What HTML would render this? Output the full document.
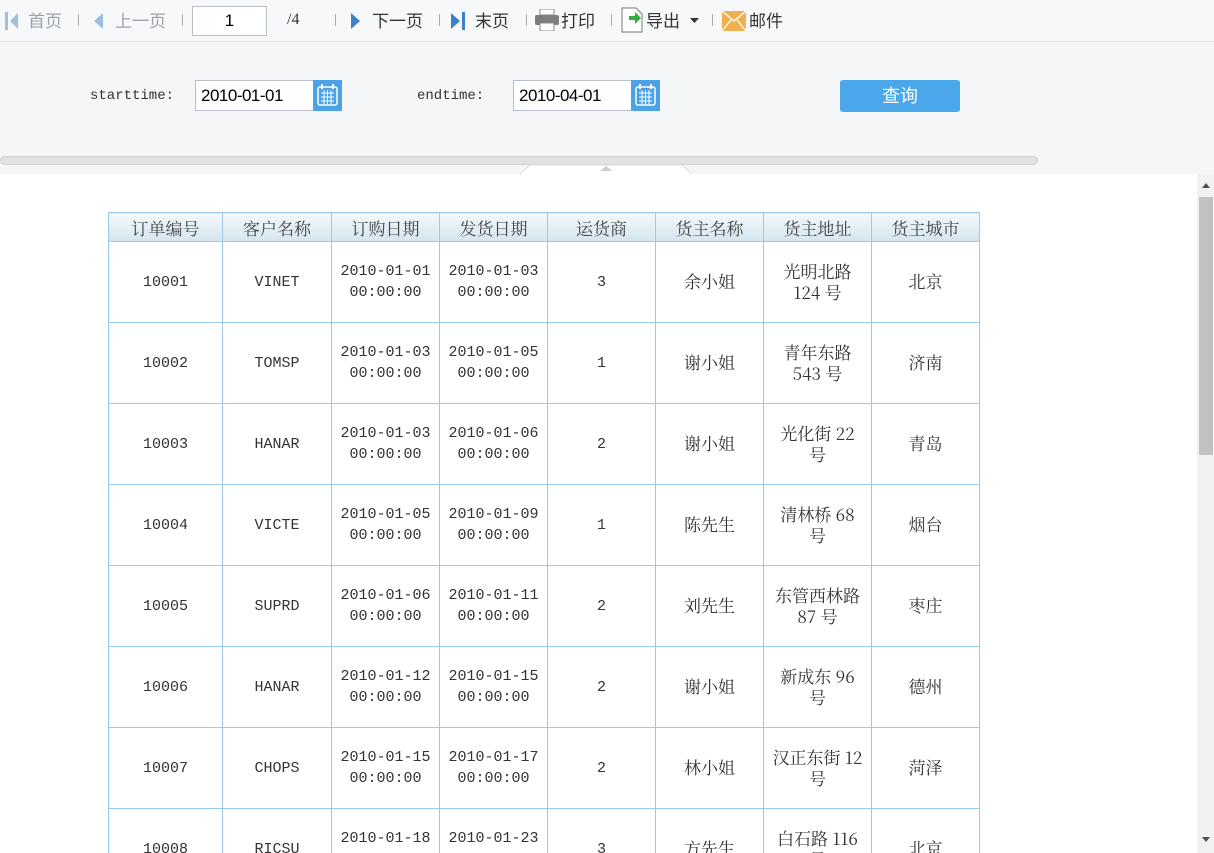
<!DOCTYPE html>
<html style="overflow:hidden;height:853px"><head><meta charset="utf-8"><style>
*{margin:0;padding:0;box-sizing:border-box}
body{width:1214px;height:853px;overflow:hidden;background:#fff;font-family:"Liberation Sans","Noto Sans CJK SC",sans-serif;position:relative}
.tb{position:absolute;left:0;top:0;width:1214px;height:42px;background:#f7f8fa;border-bottom:1px solid #e3e5e8}
.t{position:absolute;top:7px;font-size:17px;color:#333;white-space:nowrap}
.g{color:#9aa3ad}
.sep{position:absolute;top:14px;width:1px;height:12px;background:#aaa}
.top{position:absolute;left:0;top:42px;width:1214px;height:132px;background:#f5f6f8}
.lbl{position:absolute;top:88px;font-family:"Liberation Mono",monospace;font-size:14px;color:#333}
.inp{position:absolute;top:80px;height:31px;border:1px solid #b7bdc9;background:#fff;font-size:17px;padding:5px 5px;color:#000;letter-spacing:-0.5px}
.cal{position:absolute;top:80px;width:29px;height:31px;background:#4aa3e6}
.btn{position:absolute;left:840px;top:80px;width:120px;height:32px;background:#4aa8ea;border-radius:3px;color:#fff;font-size:18px;text-align:center;line-height:32px}
.wrap{position:absolute;left:0;top:174px;width:1197px;height:679px;overflow:hidden}
table{position:absolute;left:108px;top:38px;border-collapse:collapse;font-family:"Liberation Mono","Noto Serif CJK SC",monospace;font-size:15px;color:#333}
td,th{border:1px solid #9cc8ec;text-align:center;font-weight:normal;line-height:21px}
th{height:29px;background:linear-gradient(#f3f8fb,#d4e5ef);font-size:17px;color:#444;font-family:"Noto Serif CJK SC",serif}
td{height:81px}
td.c{font-family:"Noto Serif CJK SC",serif;font-size:17px;line-height:21px;padding-bottom:3px}
</style></head><body>
<div class="tb">
<svg style="position:absolute;left:5px;top:12px" width="20" height="18"><rect x="0" y="0" width="3" height="18" fill="#9fbfdf"/><path d="M5 9 L13 1 L13 17Z" fill="#9fbfdf"/></svg>
<span class="t g" style="left:28px">首页</span><div class="sep" style="left:78px"></div>
<svg style="position:absolute;left:94px;top:12px" width="12" height="18"><path d="M0 9 L9 1 L9 17Z" fill="#9fbfdf"/></svg>
<span class="t g" style="left:115px">上一页</span><div class="sep" style="left:182px"></div>
<div style="position:absolute;left:192px;top:6px;width:75px;height:30px;border:1px solid #b7bdc9;background:#fff;text-align:center;font-size:17px;line-height:28px">1</div>
<span class="t" style="left:287px;font-family:'Liberation Serif',serif;font-size:16px;top:11px">/4</span><div class="sep" style="left:335px"></div>
<svg style="position:absolute;left:350px;top:12px" width="12" height="18"><path d="M1 1 L10 9 L1 17Z" fill="#3b82c8"/></svg>
<span class="t" style="left:372px">下一页</span><div class="sep" style="left:439px"></div>
<svg style="position:absolute;left:451px;top:12px" width="20" height="18"><path d="M0 1 L9 9 L0 17Z" fill="#3b82c8"/><rect x="11" y="0" width="3" height="18" fill="#3b82c8"/></svg>
<span class="t" style="left:475px">末页</span><div class="sep" style="left:526px"></div>
<svg style="position:absolute;left:535px;top:9px" width="24" height="22"><rect x="5" y="0" width="14" height="6" fill="#fff" stroke="#888"/><rect x="0" y="6" width="24" height="10" rx="2" fill="#7d7d7d"/><rect x="5" y="14" width="14" height="8" fill="#fff" stroke="#888"/></svg>
<span class="t" style="left:561px">打印</span><div class="sep" style="left:611px"></div>
<svg style="position:absolute;left:621px;top:7px" width="22" height="26"><path d="M1 1 H15 L21 7 V25 H1Z" fill="#fff" stroke="#777"/><path d="M8 9 H14 V5 L20 11 L14 17 V13 H8Z" fill="#2fae3c"/></svg>
<span class="t" style="left:646px">导出</span>
<svg style="position:absolute;left:690px;top:18px" width="9" height="6"><path d="M0 0 H9 L4.5 5Z" fill="#333"/></svg>
<div class="sep" style="left:712px"></div>
<svg style="position:absolute;left:722px;top:11px" width="24" height="20"><rect width="24" height="20" fill="#f0b050"/><path d="M0 0 L12 10 L24 0 M0 20 L9 9 M24 20 L15 9" stroke="#fff" stroke-width="1.3" fill="none"/></svg>
<span class="t" style="left:749px">邮件</span>
</div>
<div class="top"></div>
<span class="lbl" style="left:90px">starttime:</span>
<div class="inp" style="left:195px;width:120px">2010-01-01</div>
<div class="cal" style="left:313px"><svg width="29" height="31"><rect x="5" y="7" width="19" height="18" rx="2" fill="none" stroke="#fff" stroke-width="1.5"/><path d="M8 13H21M8 17H21M8 21H21M11 10V24M14.5 10V24M18 10V24" stroke="#fff" stroke-width="1"/><rect x="8" y="4" width="2" height="5" fill="#fff"/><rect x="19" y="4" width="2" height="5" fill="#fff"/></svg></div>
<span class="lbl" style="left:417px">endtime:</span>
<div class="inp" style="left:513px;width:120px">2010-04-01</div>
<div class="cal" style="left:631px"><svg width="29" height="31"><rect x="5" y="7" width="19" height="18" rx="2" fill="none" stroke="#fff" stroke-width="1.5"/><path d="M8 13H21M8 17H21M8 21H21M11 10V24M14.5 10V24M18 10V24" stroke="#fff" stroke-width="1"/><rect x="8" y="4" width="2" height="5" fill="#fff"/><rect x="19" y="4" width="2" height="5" fill="#fff"/></svg></div>
<div class="btn">查询</div>
<div style="position:absolute;left:0;top:156px;width:1038px;height:9px;background:#e2e2e2;border:1px solid #d2d2d2;border-radius:5px"></div>
<svg style="position:absolute;left:520px;top:164px" width="172" height="10"><path d="M0 10 L10 1 H162 L172 10" fill="#fff" stroke="#ddd"/><path d="M80 7 L86 2 L92 7Z" fill="#ccc"/></svg>
<div style="position:absolute;left:1197px;top:174px;width:17px;height:679px;background:#f1f1f1"></div>
<div style="position:absolute;left:1199px;top:197px;width:14px;height:258px;background:#c1c1c1"></div>
<svg style="position:absolute;left:1201px;top:181px" width="10" height="8"><path d="M1 7 L5 2 L9 7Z" fill="#505050"/></svg>
<svg style="position:absolute;left:1201px;top:836px" width="10" height="8"><path d="M1 1 L5 6 L9 1Z" fill="#505050"/></svg>
<div class="wrap">
<table>
<tr><th style="width:114px">订单编号</th><th style="width:109px">客户名称</th><th style="width:108px">订购日期</th><th style="width:108px">发货日期</th><th style="width:108px">运货商</th><th style="width:108px">货主名称</th><th style="width:108px">货主地址</th><th style="width:108px">货主城市</th></tr>
<tr><td>10001</td><td>VINET</td><td>2010-01-01<br>00:00:00</td><td>2010-01-03<br>00:00:00</td><td>3</td><td class="c">余小姐</td><td class="c">光明北路<br>124 号</td><td class="c">北京</td></tr>
<tr><td>10002</td><td>TOMSP</td><td>2010-01-03<br>00:00:00</td><td>2010-01-05<br>00:00:00</td><td>1</td><td class="c">谢小姐</td><td class="c">青年东路<br>543 号</td><td class="c">济南</td></tr>
<tr><td>10003</td><td>HANAR</td><td>2010-01-03<br>00:00:00</td><td>2010-01-06<br>00:00:00</td><td>2</td><td class="c">谢小姐</td><td class="c">光化街 22<br>号</td><td class="c">青岛</td></tr>
<tr><td>10004</td><td>VICTE</td><td>2010-01-05<br>00:00:00</td><td>2010-01-09<br>00:00:00</td><td>1</td><td class="c">陈先生</td><td class="c">清林桥 68<br>号</td><td class="c">烟台</td></tr>
<tr><td>10005</td><td>SUPRD</td><td>2010-01-06<br>00:00:00</td><td>2010-01-11<br>00:00:00</td><td>2</td><td class="c">刘先生</td><td class="c">东管西林路<br>87 号</td><td class="c">枣庄</td></tr>
<tr><td>10006</td><td>HANAR</td><td>2010-01-12<br>00:00:00</td><td>2010-01-15<br>00:00:00</td><td>2</td><td class="c">谢小姐</td><td class="c">新成东 96<br>号</td><td class="c">德州</td></tr>
<tr><td>10007</td><td>CHOPS</td><td>2010-01-15<br>00:00:00</td><td>2010-01-17<br>00:00:00</td><td>2</td><td class="c">林小姐</td><td class="c">汉正东街 12<br>号</td><td class="c">菏泽</td></tr>
<tr><td>10008</td><td>RICSU</td><td>2010-01-18<br>00:00:00</td><td>2010-01-23<br>00:00:00</td><td>3</td><td class="c">方先生</td><td class="c">白石路 116<br>号</td><td class="c">北京</td></tr>
</table>
</div>
</body></html>
